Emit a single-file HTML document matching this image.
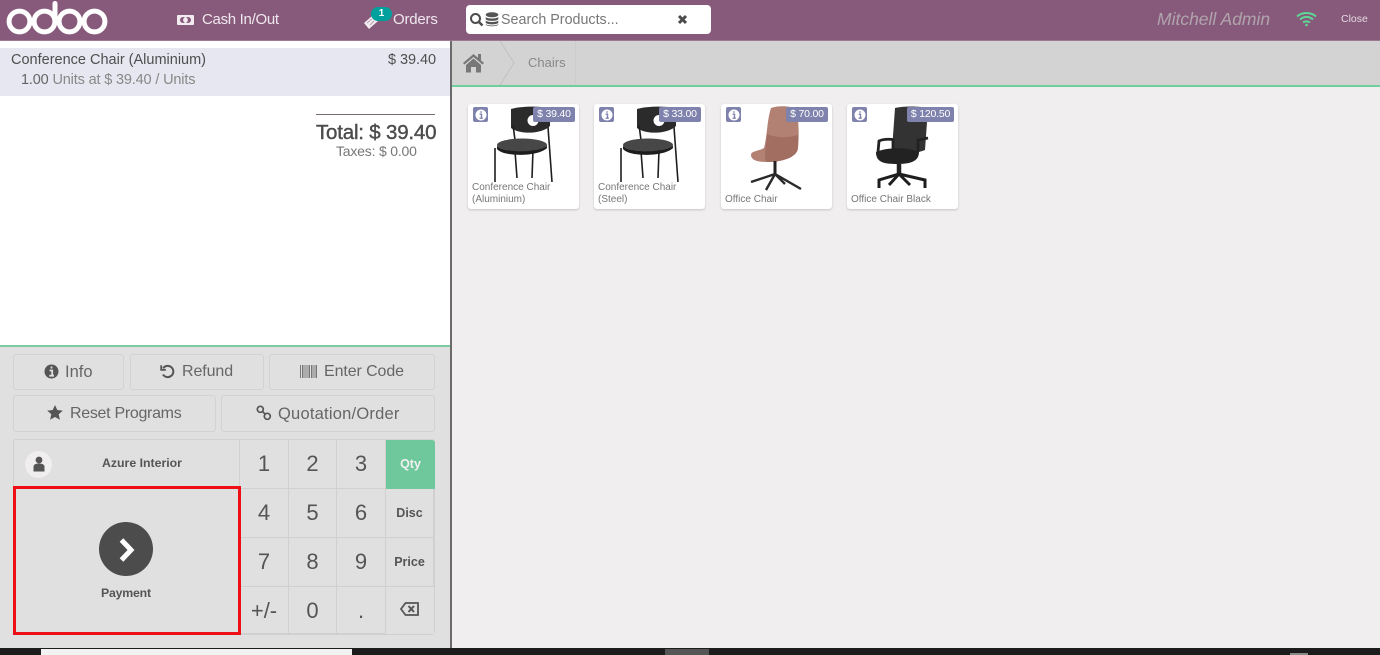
<!DOCTYPE html>
<html><head><meta charset="utf-8"><title>POS</title>
<style>
html,body{margin:0;padding:0;width:1380px;height:655px;overflow:hidden;background:#f0eeee;font-family:"Liberation Sans",sans-serif;color:#555}
div,span,svg{position:absolute;box-sizing:border-box}
.t{white-space:nowrap;line-height:1}
.btn{background:#e0e0e0;border:1px solid #d3d3d3;border-radius:3px}
.k{border-right:1px solid #d0d0d0;border-bottom:1px solid #d0d0d0;background:#e0e0e0;text-align:center;font-size:22px;color:#555;line-height:48px}
.k.s{font-size:12.5px;font-weight:bold;color:#555}
.card{top:104px;width:111px;height:105px;background:#fff;border-radius:3px;box-shadow:0 1px 2px rgba(0,0,0,.18)}
.info{left:5px;top:3px;width:15px;height:15px;background:#7f82ac;border-radius:2px}
.price{top:3px;height:15px;background:#7f82ac;color:#fff;font-size:10.5px;line-height:15px;text-align:center;border-radius:2px;letter-spacing:-.2px}
.nm{left:4px;color:#777;font-size:10px;line-height:12px;white-space:nowrap}
</style></head><body>

<!-- Header -->
<div style="left:0;top:0;width:1380px;height:41px;background:#875a7b;border-bottom:1px solid #9b7a92"></div>
<svg style="left:0;top:0" width="120" height="40" viewBox="0 0 120 40" fill="none" stroke="#fff" stroke-width="5">
<circle cx="19.5" cy="21.5" r="10.4"/><circle cx="44.5" cy="21.5" r="10.4"/><path d="M55 21V3.500" stroke-linecap="round"/><circle cx="69.500" cy="21.500" r="10.4"/><circle cx="94.500" cy="21.500" r="10.4"/></svg>

<svg style="left:177px;top:14px" width="17" height="12" viewBox="0 0 17 12"><rect x="0" y="1" width="17" height="10" rx="1" fill="#f2ecf0"/><circle cx="6" cy="6" r="3" fill="#875a7b"/><circle cx="11" cy="6" r="3" fill="#875a7b"/><circle cx="8.500" cy="6" r="2.400" fill="#f2ecf0"/></svg>
<span class="t" style="left:202px;top:12px;font-size:15px;color:#f0e8ee;letter-spacing:-.3px">Cash In/Out</span>

<svg style="left:362px;top:12px" width="18" height="18" viewBox="0 0 18 18"><path d="M2 11 10 4 16 9 7 17 Z" fill="#f2ecf0"/><path d="M5 11 10 7M8 13 12 9" stroke="#b99fb2" stroke-width="1"/></svg>
<div style="left:371px;top:7px;width:21px;height:14px;border-radius:7px;background:#00a09d;color:#fff;font-size:10px;font-weight:bold;line-height:13px;text-align:center">1</div>
<span class="t" style="left:393px;top:12px;font-size:15px;color:#f0e8ee;letter-spacing:-.2px">Orders</span>

<div style="left:466px;top:5px;width:245px;height:29px;background:#fff;border-radius:4px"></div>
<svg style="left:469px;top:12px" width="15" height="15" viewBox="0 0 15 15" fill="none" stroke="#4c4c4c" stroke-width="2"><circle cx="6.500" cy="6.500" r="4.500"/><path d="M10 10 13.500 13.500" stroke-width="2.500"/></svg>
<svg style="left:485px;top:12px" width="14" height="15" viewBox="0 0 14 15" fill="#555"><ellipse cx="7" cy="2.800" rx="6.300" ry="2.500"/><path d="M.7 5c1.500 2 11 2 12.600 0v2.200c-1.500 2.200-11 2.200-12.600 0zM.7 8.500c1.500 2 11 2 12.600 0v2.200c-1.500 2.200-11 2.200-12.600 0zM.7 12c1.500 2 11 2 12.600 0v.6c-1.500 2.200-11 2.200-12.600 0z"/></svg>
<span class="t" style="left:501px;top:13px;font-size:14.300px;color:#777">Search Products...</span>
<svg style="left:677px;top:14px" width="11" height="11" viewBox="0 0 11 11"><path d="M2 2 9 9M9 2 2 9" stroke="#4c4c4c" stroke-width="3"/></svg>

<span class="t" style="left:1157px;top:11px;font-size:17.500px;font-style:italic;color:#b0a4ad;letter-spacing:0">Mitchell Admin</span>
<svg style="left:1296px;top:11px" width="21" height="16" viewBox="0 0 21 16" fill="none" stroke="#5fd895" stroke-width="2"><path d="M1 5.500C6 .8 15 .8 20 5.500"/><path d="M4 8.500C8 5 13 5 17 8.500"/><path d="M7 11.500C9 10 12 10 14 11.500"/><circle cx="10.500" cy="14" r="1.300" fill="#5fd895" stroke="none"/></svg>
<span class="t" style="left:1341px;top:14px;font-size:10.500px;color:#e4d9e1">Close</span>

<!-- Left top panel -->
<div style="left:0;top:41px;width:450px;height:304px;background:#fff"></div>
<div style="left:0;top:48px;width:450px;height:48px;background:#e6e7f0"></div>
<span class="t" style="left:11px;top:53px;font-size:14.500px;color:#4f4f4f">Conference Chair (Aluminium)</span>
<span class="t" style="left:388px;top:53px;font-size:14.500px;color:#4f4f4f;letter-spacing:-.05px">$ 39.40</span>
<span class="t" style="left:21px;top:73px;font-size:14.500px;color:#888;letter-spacing:-.16px"><b style="font-weight:normal;color:#666">1.00</b> Units at $ 39.40 / Units</span>
<div style="left:316px;top:114px;width:119px;height:1px;background:#7a6a75"></div>
<span class="t" style="left:316px;top:123px;font-size:20.500px;color:#4c4c4c;letter-spacing:-.2px;-webkit-text-stroke:.4px #4c4c4c">Total: $ 39.40</span>
<span class="t" style="left:336px;top:144px;font-size:14px;color:#777;letter-spacing:-.2px">Taxes: $ 0.00</span>

<div style="left:0;top:345px;width:450px;height:2px;background:#7ccba3"></div>
<div style="left:0;top:347px;width:450px;height:301px;background:#e0e0e0"></div>
<div style="left:450px;top:41px;width:2px;height:607px;background:#6b6b6b"></div>

<!-- Breadcrumb -->
<div style="left:452px;top:41px;width:928px;height:44px;background:#d3d3d3"></div>
<div style="left:452px;top:85px;width:928px;height:2px;background:#6fcf9c"></div>
<svg style="left:452px;top:41px" width="130" height="44" viewBox="0 0 130 44" fill="none"><path d="M48 0 62 22 48 44" stroke="#c2c2c2"/><path d="M123.500 0V44" stroke="#c4c4c4" stroke-dasharray="1 1"/>
<path d="M21.500 13 32 22 30.500 23.500 21.500 16 12.500 23.500 11 22Z" fill="#777"/><path d="M14 24 21.500 17.500 29 24V31.500H24V26H19V31.500H14Z" fill="#777"/><rect x="26" y="13" width="3" height="6" fill="#777"/></svg>
<span class="t" style="left:528px;top:56px;font-size:13px;color:#888">Chairs</span>

<!-- Symbols -->
<svg width="0" height="0" style="left:0;top:0"><defs>
<symbol id="cc" viewBox="0 0 111 105">
<path d="M43 5C52 2 72 2 82 4V22C74 30 52 31 43 24Z" fill="#2b2b2b"/>
<circle cx="65" cy="16.500" r="5.500" fill="#fff"/>
<path d="M45 21 47 36M80 23 84 78" stroke="#1e1e1e" stroke-width="1.600" fill="none"/>
<ellipse cx="54" cy="41" rx="25" ry="6.500" fill="#474747"/>
<path d="M29 42C35 49 70 49 79 42L79 44C70 53 35 53 29 45Z" fill="#1d1d1d"/>
<path d="M27 44 27 78M47 47 49 74M65 46 64 74" stroke="#1e1e1e" stroke-width="1.600" fill="none"/>
</symbol>
</defs></svg>

<!-- Cards -->
<div class="card" style="left:468px">
<svg width="111" height="105" style="left:0;top:0"><use href="#cc"/></svg>
<div class="info"></div><svg class="ic" style="left:6.500px;top:4.500px" width="12" height="12" viewBox="0 0 12 12"><circle cx="6" cy="6" r="5.500" fill="#fff"/><path d="M6 2.200v1.600M4.600 5.200H6.500V9M4.600 9.200H7.800" stroke="#7f82ac" stroke-width="1.400" fill="none"/></svg>
<div class="price" style="left:65px;width:42px">$ 39.40</div>
<div class="nm" style="top:78px">Conference Chair<br>(Aluminium)</div>
</div>
<div class="card" style="left:594px">
<svg width="111" height="105" style="left:0;top:0"><use href="#cc"/></svg>
<div class="info"></div><svg style="left:6.500px;top:4.500px" width="12" height="12" viewBox="0 0 12 12"><circle cx="6" cy="6" r="5.500" fill="#fff"/><path d="M6 2.200v1.600M4.600 5.200H6.500V9M4.600 9.200H7.800" stroke="#7f82ac" stroke-width="1.400" fill="none"/></svg>
<div class="price" style="left:65px;width:42px">$ 33.00</div>
<div class="nm" style="top:78px">Conference Chair<br>(Steel)</div>
</div>
<div class="card" style="left:721px">
<svg width="111" height="105" style="left:0;top:0" viewBox="0 0 111 105">
<path d="M50 4C58 1 72 2 76 6C78 20 78 36 77 44C76 54 60 58 46 58C36 58 30 56 30 51C30 47 38 47 43 44C46 34 46 16 50 4Z" fill="#b28173"/>
<path d="M46 30C55 34 68 34 77 31L77 44C76 54 60 58 46 58C42 54 45 46 46 30Z" fill="#a26e61"/>
<path d="M54 57V72" stroke="#222" stroke-width="3"/>
<path d="M54 70 30 78M54 70 80 85M54 70 45 86M54 70 64 80" stroke="#2a2a2a" stroke-width="2.400" fill="none"/>
</svg>
<div class="info"></div><svg style="left:6.500px;top:4.500px" width="12" height="12" viewBox="0 0 12 12"><circle cx="6" cy="6" r="5.500" fill="#fff"/><path d="M6 2.200v1.600M4.600 5.200H6.500V9M4.600 9.200H7.800" stroke="#7f82ac" stroke-width="1.400" fill="none"/></svg>
<div class="price" style="left:65px;width:42px">$ 70.00</div>
<div class="nm" style="top:90px">Office Chair</div>
</div>
<div class="card" style="left:847px">
<svg width="111" height="105" style="left:0;top:0" viewBox="0 0 111 105">
<path d="M48 4C56 2 72 2 81 4L78 46C68 50 52 50 45 46Z" fill="#333"/>
<path d="M29 48C29 58 36 60 50 60C62 60 72 58 72 48C62 43 40 43 29 48Z" fill="#222"/>
<path d="M31 48 32 37C36 35 41 35 46 35.500M46 35V45M71 48V36L81 34" stroke="#222" stroke-width="2.800" fill="none"/>
<path d="M52 60V71" stroke="#222" stroke-width="4.500"/>
<path d="M52 70 32 76V84M52 70 78 76V84M52 70 42 81M52 70 63 81" stroke="#1e1e1e" stroke-width="3" fill="none"/>
</svg>
<div class="info"></div><svg style="left:6.500px;top:4.500px" width="12" height="12" viewBox="0 0 12 12"><circle cx="6" cy="6" r="5.500" fill="#fff"/><path d="M6 2.200v1.600M4.600 5.200H6.500V9M4.600 9.200H7.800" stroke="#7f82ac" stroke-width="1.400" fill="none"/></svg>
<div class="price" style="left:60px;width:47px">$ 120.50</div>
<div class="nm" style="top:90px">Office Chair Black</div>
</div>

<!-- Control buttons -->
<div class="btn" style="left:13px;top:354px;width:111px;height:36px"></div>
<div class="btn" style="left:130px;top:354px;width:134px;height:36px"></div>
<div class="btn" style="left:269px;top:354px;width:166px;height:36px"></div>
<div class="btn" style="left:13px;top:395px;width:203px;height:37px"></div>
<div class="btn" style="left:221px;top:395px;width:214px;height:37px"></div>

<svg style="left:44px;top:364px" width="15" height="15" viewBox="0 0 15 15"><circle cx="7.500" cy="7.500" r="7" fill="#555"/><path d="M7.500 2.500v2M5.500 6.500H8.200V11.500M5.300 11.700H10" stroke="#e0e0e0" stroke-width="1.800" fill="none"/></svg>
<span class="t" style="left:65px;top:364px;font-size:16.500px;color:#666">Info</span>

<svg style="left:160px;top:364px" width="15" height="15" viewBox="0 0 15 15" fill="none" stroke="#555" stroke-width="2"><path d="M3.200 4.200A5.600 5.600 0 1 1 3 10.500"/><path d="M1.200 1.200V5.800H5.800" stroke-width="1.800"/></svg>
<span class="t" style="left:182px;top:364px;font-size:16px;color:#666;letter-spacing:-.1px">Refund</span>

<svg style="left:300px;top:365px" width="17" height="13" viewBox="0 0 17 13" stroke="#777"><path d="M.5 0V13M2.500 0V13M4 0V13M6 0V13M8 0V13M9.500 0V13M11.500 0V13M13 0V13M15 0V13M16.500 0V13" stroke-width="1"/></svg>
<span class="t" style="left:324px;top:364px;font-size:16px;color:#666;letter-spacing:-.1px">Enter Code</span>

<svg style="left:47px;top:405px" width="16" height="15" viewBox="0 0 16 15"><path d="M8 0 10.300 5 15.800 5.600 11.700 9.300 12.900 14.800 8 12 3.100 14.800 4.300 9.300 .2 5.600 5.700 5Z" fill="#555"/></svg>
<span class="t" style="left:70px;top:405.500px;font-size:16px;color:#666;letter-spacing:-.3px">Reset Programs</span>

<svg style="left:256px;top:405px" width="16" height="16" viewBox="0 0 16 16" fill="none" stroke="#555" stroke-width="1.700"><circle cx="4.300" cy="4.300" r="3"/><circle cx="11.300" cy="11.300" r="3"/><path d="M6.500 6.500 9 9"/></svg>
<span class="t" style="left:278px;top:405.500px;font-size:16.500px;color:#666;letter-spacing:.22px">Quotation/Order</span>

<!-- Numpad + customer -->
<div style="left:13px;top:439px;width:422px;height:196px;border:1px solid #d0d0d0;border-radius:3px;background:#e0e0e0"></div>
<div style="left:13px;top:440px;width:227px;height:47px;border-right:1px solid #d0d0d0"></div>
<div style="left:25px;top:451px;width:27px;height:27px;border-radius:50%;background:#f0eeee"></div>
<svg style="left:32px;top:456px" width="14" height="16" viewBox="0 0 14 16" fill="#555"><circle cx="7" cy="4" r="3.400"/><path d="M1.500 15.500V11C1.500 8.500 3.500 7.500 7 7.500S12.500 8.500 12.500 11V15.500Z"/></svg>
<span class="t" style="left:102px;top:457px;font-size:12.300px;font-weight:bold;color:#555">Azure Interior</span>

<div class="k" style="left:240px;top:440px;width:49px;height:49px">1</div>
<div class="k" style="left:289px;top:440px;width:48px;height:49px">2</div>
<div class="k" style="left:337px;top:440px;width:49px;height:49px">3</div>
<div class="k s" style="left:386px;top:440px;width:49px;height:49px;background:#6ec89b;color:#f0f0f0;border:0;border-radius:0 3px 0 0">Qty</div>
<div class="k" style="left:240px;top:489px;width:49px;height:49px">4</div>
<div class="k" style="left:289px;top:489px;width:48px;height:49px">5</div>
<div class="k" style="left:337px;top:489px;width:49px;height:49px">6</div>
<div class="k s" style="left:386px;top:489px;width:48px;height:49px">Disc</div>
<div class="k" style="left:240px;top:538px;width:49px;height:49px">7</div>
<div class="k" style="left:289px;top:538px;width:48px;height:49px">8</div>
<div class="k" style="left:337px;top:538px;width:49px;height:49px">9</div>
<div class="k s" style="left:386px;top:538px;width:48px;height:49px">Price</div>
<div class="k" style="left:240px;top:587px;width:49px;height:47px">+/-</div>
<div class="k" style="left:289px;top:587px;width:48px;height:47px">0</div>
<div class="k" style="left:337px;top:587px;width:49px;height:47px">.</div>
<div class="k" style="left:386px;top:587px;width:48px;height:47px;border-right:0;border-bottom:0"></div>
<svg style="left:400px;top:602px" width="19" height="14" viewBox="0 0 19 14" fill="none" stroke="#555" stroke-width="1.800"><path d="M5.500 1H18V13H5.500L1 7Z"/><path d="M8.500 4 14 10M14 4 8.500 10" stroke-width="2"/></svg>

<!-- Payment -->
<div style="left:13px;top:486px;width:228px;height:149px;border:3px solid #ee0f16;background:#e0e0e0"></div>
<div style="left:99px;top:522px;width:54px;height:54px;border-radius:50%;background:#4c4c4c"></div>
<svg style="left:118px;top:537px" width="20" height="26" viewBox="0 0 20 26" fill="none"><path d="M3.500 3 13 13 3.500 23" stroke="#fff" stroke-width="5"/></svg>
<span class="t" style="left:101px;top:587px;font-size:12.300px;font-weight:bold;color:#555;letter-spacing:-.2px">Payment</span>

<!-- Bottom bar -->
<div style="left:0;top:648px;width:1380px;height:7px;background:#1c1c1c"></div>
<div style="left:41px;top:649px;width:311px;height:6px;background:#f2f2f2"></div>
<div style="left:665px;top:649px;width:44px;height:6px;background:#555"></div>
<div style="left:1290px;top:653px;width:18px;height:2px;background:#888"></div>
</body></html>
